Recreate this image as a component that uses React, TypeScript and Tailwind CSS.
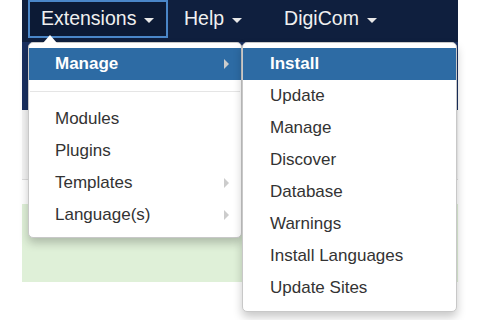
const font = { fontFamily: '"Liberation Sans", Arial, sans-serif' };

function Caret() {
  return (
    <span className="inline-block ml-[8px] w-0 h-0 border-l-[5px] border-r-[5px] border-t-[5px] border-l-transparent border-r-transparent border-t-[#e8e8e8] translate-y-[1px]" />
  );
}

function SubArrow() {
  return (
    <span className="w-0 h-0 border-t-[5px] border-b-[5px] border-l-[5px] border-t-transparent border-b-transparent border-l-[#cccccc]" />
  );
}

function Item({ label, active, sub }: { label: string; active?: boolean; sub?: boolean }) {
  return (
    <div
      className={`h-[32px] flex items-center justify-between pr-[12px] text-[17px] ${
        active ? 'bg-[#2d6ba4] text-white font-bold' : 'text-[#333]'
      }`}
    >
      <span>{label}</span>
      {sub && <SubArrow />}
    </div>
  );
}

export default function App() {
  const main = ['Modules', 'Plugins', 'Templates', 'Language(s)'];
  const install = ['Update', 'Manage', 'Discover', 'Database', 'Warnings', 'Install Languages', 'Update Sites'];

  return (
    <div className="w-[480px] h-[320px] bg-white overflow-hidden" style={font}>
      <div className="ml-[22px] w-[436px] relative">
        <div className="h-[42px] bg-[#0f1f3e] flex items-start pl-[6px] text-[19.5px] text-[#f0f0f0]">
          <div className="w-[140px] h-[38px] border-2 border-[#4a86c8] bg-[#0c1a35] flex items-center pl-[11px]">
            Extensions
            <Caret />
          </div>
          <div className="h-[38px] flex items-center pl-[16px]">
            Help
            <Caret />
          </div>
          <div className="h-[38px] flex items-center pl-[42px]">
            DigiCom
            <Caret />
          </div>
        </div>
        <div className="h-[68px] bg-[#1a3060]" />
        <div className="h-[70px] bg-[#f4f4f4] border-b border-[#dddddd]" />
        <div className="h-[24px] bg-white" />
        <div className="h-[78px] bg-[#dff0d8]" />

        {/* first menu */}
        <div className="absolute left-[6px] top-[42px] w-[214px] bg-white border border-[#c8c8c8] rounded-[5px] shadow-[0_5px_10px_rgba(0,0,0,0.22)] pt-[5px] pb-[6px]">
          <div className="absolute -top-[8px] left-[14px] w-0 h-0 border-l-[7px] border-r-[7px] border-b-[8px] border-l-transparent border-r-transparent border-b-white" />
          <div className="pl-[26px] bg-[#2d6ba4]">
            <Item label="Manage" active sub />
          </div>
          <div className="h-px bg-[#e5e5e5] my-[11px] mx-[1px]" />
          <div className="pl-[26px]">
            {main.map((m) => (
              <Item key={m} label={m} sub={m === 'Templates' || m === 'Language(s)'} />
            ))}
          </div>
        </div>

        {/* submenu */}
        <div className="absolute left-[220px] top-[42px] w-[215px] bg-white border border-[#c8c8c8] rounded-[5px] shadow-[0_5px_10px_rgba(0,0,0,0.22)] pt-[5px] pb-[7px]">
          <div className="pl-[27px] bg-[#2d6ba4]">
            <Item label="Install" active />
          </div>
          <div className="pl-[27px]">
            {install.map((m) => (
              <Item key={m} label={m} />
            ))}
          </div>
        </div>
      </div>
    </div>
  );
}
